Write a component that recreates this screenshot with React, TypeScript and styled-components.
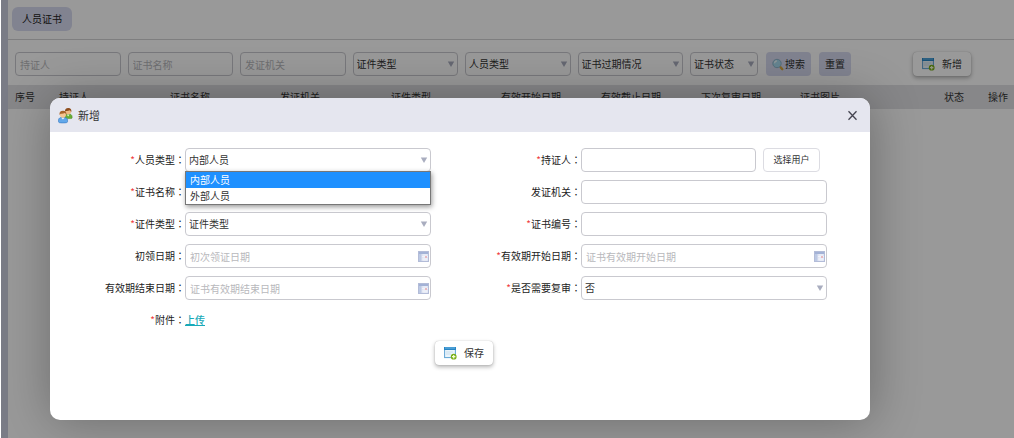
import React, { useState } from "react";
import styled, { createGlobalStyle, css } from "styled-components";

const GlobalStyle = createGlobalStyle`
  *, *::before, *::after { box-sizing: border-box; }
  body {
    margin: 0;
    padding-left: 1px;
    background: #fff;
    color: #333;
    font-family: "Noto Sans CJK SC", sans-serif;
    font-size: 10px;
    line-height: 16px;
  }
  button, input, select { font: inherit; color: inherit; margin: 0; }
`;

const Page = styled.div`
  position: relative;
  min-height: 100vh;
  border-left: 7px solid #cccfe0;
`;

const TabBar = styled.nav`
  display: flex;
  padding: 7px 4px 8px;
  border-bottom: 1px solid #d2d2d4;
`;

const Tab = styled.a`
  padding: 4px 10px;
  border-radius: 6px;
  background: #d8dbf0;
  color: #222;
  text-decoration: none;
`;

const Toolbar = styled.form`
  display: flex;
  gap: 8px;
  padding: 12px 43px 9px 7px;
`;

const Filters = styled.div`
  display: flex;
  flex: 1;
  gap: 7px;
`;

const Slot = styled.div<{ $width?: number }>`
  display: grid;
  position: relative;
  align-items: center;
  min-width: 0;
  ${({ $width }) => ($width ? css`flex: none; width: ${$width}px;` : css`flex: 1;`)}
  > * { grid-area: 1 / 1; }
  > svg { justify-self: end; margin-right: 2px; pointer-events: none; }
`;

const field = css`
  width: 100%;
  min-width: 0;
  height: 24px;
  border: 1px solid #c9c9cf;
  border-radius: 4px;
  background: #fff;
  outline: none;
`;

const TextBox = styled.input`
  ${field}
  padding: 0 4px;
  &::placeholder { color: #b8b8bc; opacity: 1; }
`;

const DropDown = styled.select`
  ${field}
  padding: 0 3px;
  appearance: none;
`;

const Button = styled.button<{ $raised?: boolean }>`
  display: flex;
  align-items: center;
  justify-content: center;
  gap: ${({ $raised }) => ($raised ? 7 : 1)}px;
  height: 24px;
  padding: 0 6px;
  border: 0;
  border-radius: 4px;
  background: ${({ $raised }) => ($raised ? "#fff" : "#d8dbf0")};
  color: #333;
  white-space: nowrap;
  ${({ $raised }) => $raised && css`
    padding: 0 9px;
    box-shadow: 0 2px 4px rgba(0, 0, 0, 0.3), 0 0 1px rgba(0, 0, 0, 0.3);
  `}
`;

const AddSlot = styled.div`
  margin-left: 54px;
`;

const Table = styled.table`
  width: 100%;
  table-layout: fixed;
  border-collapse: collapse;
  background: #e1e1e4;
  th {
    height: 24px;
    padding: 0 0 0 7px;
    font-weight: 400;
    text-align: left;
    white-space: nowrap;
  }
`;

const Overlay = styled.div`
  position: absolute;
  inset: 0 0 0 -7px;
  padding: 98px 144px 18px 49px;
  background: rgba(0, 0, 0, 0.4);
`;

const Dialog = styled.section`
  border-radius: 10px;
  background: #fff;
  box-shadow: 1px 1px 50px rgba(0, 0, 0, 0.3);
`;

const DialogHeader = styled.header`
  display: flex;
  align-items: center;
  gap: 5px;
  height: 34px;
  padding: 0 12px 0 8px;
  border-radius: 10px 10px 0 0;
  background: #e5e6ef;
`;

const Title = styled.h2`
  flex: 1;
  margin: 0;
  font-size: 11px;
  font-weight: 400;
`;

const CloseButton = styled.button`
  display: flex;
  padding: 0;
  border: 0;
  background: none;
`;

const Fields = styled.form`
  display: grid;
  grid-template-columns: 1fr 1fr;
  gap: 8px 15px;
  padding: 16px 43px 55px 0;
`;

const Row = styled.div`
  display: flex;
  align-items: center;
  height: 24px;
`;

const Label = styled.label`
  flex: none;
  width: 135px;
  text-align: right;
  color: #222;
`;

const Colon = styled.span`
  font-family: "Noto Sans CJK TC", sans-serif;
`;

const Required = styled.span`
  color: #f03c3c;
`;

const PickUser = styled.button`
  flex: none;
  width: 57px;
  height: 24px;
  margin: 0 7px;
  padding: 0;
  border: 1px solid #dcdce2;
  border-radius: 4px;
  background: #fff;
  font-size: 9px;
`;

const Upload = styled.a`
  color: #17a9b8;
  font-weight: 500;
`;

const Options = styled.ul`
  position: absolute;
  top: 23px;
  left: 0;
  right: 0;
  z-index: 1;
  margin: 0;
  padding: 0;
  border: 1px solid #777;
  background: #fff;
  box-shadow: 1px 2px 5px rgba(0, 0, 0, 0.4);
  list-style: none;
`;

const Option = styled.li<{ $active: boolean }>`
  padding: 0 4px;
  background: ${({ $active }) => ($active ? "#1e90ff" : "#fff")};
  color: ${({ $active }) => ($active ? "#fff" : "#333")};
`;

const Footer = styled.div`
  display: flex;
  grid-column: 1 / -1;
  justify-content: center;
  padding: 1px 0 0 51px;
`;

const Arrow = () => (
  <svg width="10" height="8" viewBox="0 0 10 8" aria-hidden="true">
    <path d="M1.800 1.500h6.400L5 7z" fill="#a9adbf" />
  </svg>
);

const CalendarIcon = () => (
  <svg width="11" height="11" viewBox="0 0 11 11" aria-hidden="true">
    <rect x=".5" y=".5" width="10" height="10" fill="#dfe4f2" stroke="#b3bcd8" />
    <path d="M1 1h9v2H1z" fill="#a3b2d6" />
    <path d="M1 3h2.500v7H1z" fill="#bcc9e4" />
    <path d="M4 5.500h6M4 8h6M6 3v7M8 3v7" stroke="#f7f8fd" strokeWidth=".7" />
    <path d="M7 5h2v2H7z" fill="#e8b9c0" />
  </svg>
);

const FormIcon = () => (
  <svg width="13" height="14" viewBox="0 0 13 14" aria-hidden="true">
    <rect x=".6" y="1.600" width="10.800" height="10" fill="#eaf4fb" stroke="#5fa3d3" />
    <path d="M0 1h12v3H0z" fill="#2786c5" />
    <path d="M1 2h10" stroke="#82c3ed" strokeWidth=".8" />
    <path d="M2 6h7M2 8h5" stroke="#c9deed" />
    <circle cx="9.700" cy="10.700" r="2.900" fill="#79ae19" />
    <path d="M9.700 9v3.400M8 10.700h3.400" stroke="#f6ffd5" strokeWidth="1.200" />
  </svg>
);

const SearchIcon = () => (
  <svg width="12" height="13" viewBox="0 0 12 13" aria-hidden="true">
    <path d="M8.600 9.300l1.700 1.900" stroke="#d9a83d" strokeWidth="2.400" strokeLinecap="round" />
    <circle cx="5" cy="5.500" r="4.200" fill="#a9dcf0" stroke="#8fb4cb" />
    <path d="M2.600 5.300A2.600 2.600 0 015 2.900" fill="none" stroke="#f2fcff" strokeWidth="1.200" />
  </svg>
);

const UsersIcon = () => (
  <svg width="15" height="17" viewBox="0 0 17 18" aria-hidden="true">
    <path d="M7.500 12.500V10c0-2 1.500-3 4-3s4.500 1.200 4.500 3.500v1c0 .8-1 1-2 1z" fill="#68ad35" stroke="#4d8d26" strokeWidth=".6" />
    <path d="M10 8l1.500 2L13 8z" fill="#e8f6dc" />
    <circle cx="11.500" cy="4.500" r="3.200" fill="#f1b983" />
    <path d="M8 4.800C7.500 2 9 .5 11.700.5S15.800 2.300 15 5.400c-.6-1.300-1-1.800-1.500-2.300-1.500.8-3.500.8-4.500.7z" fill="#8e4d1c" />
    <path d="M.6 16v-1.800C.6 12 2.500 11 5.600 11s5.200 1 5.200 3.200V16c0 1-1.300 1.400-5.200 1.400S.6 17 .6 16z" fill="#62a8ea" stroke="#3579c2" strokeWidth=".7" />
    <path d="M3.800 11.500l1.800 2 1.800-2z" fill="#eef7ff" />
    <circle cx="5.600" cy="8" r="3.500" fill="#f7c592" />
    <path d="M1.800 8.400C1.200 5.300 2.800 3.700 5.700 3.700s4.500 1.800 3.700 5c-.5-1.400-1-2-1.600-2.500-1.600.9-3.800.9-4.900.7z" fill="#a9642a" />
  </svg>
);

const CloseIcon = () => (
  <svg width="11" height="11" viewBox="0 0 11 11" aria-hidden="true">
    <path d="M1.500 1.300l8 8.400M9.500 1.300l-8 8.400" stroke="#444450" strokeWidth="1.300" />
  </svg>
);

const columns: [string, number | undefined][] = [
  ["序号", 44],
  ["持证人", 111],
  ["证书名称", 110],
  ["发证机关", 111],
  ["证件类型", 110],
  ["有效开始日期", 100],
  ["有效截止日期", 100],
  ["下次复审日期", 99],
  ["证书图片", undefined],
  ["状态", 44],
  ["操作", 33],
];

const textFilters = ["持证人", "证书名称", "发证机关"];
const selectFilters: [string, number | undefined][] = [
  ["证件类型", undefined],
  ["人员类型", undefined],
  ["证书过期情况", undefined],
  ["证书状态", 68],
];
const staffTypes = ["内部人员", "外部人员"];

type FieldProps = {
  id: string;
  label: string;
  required?: boolean;
  children: React.ReactNode;
};

const Field = ({ id, label, required, children }: FieldProps) => (
  <Row>
    <Label htmlFor={id}>
      {required && <Required>*</Required>}
      {label}
      <Colon>：</Colon>
    </Label>
    {children}
  </Row>
);

export default function App() {
  const [staffType, setStaffType] = useState(staffTypes[0]);
  const [listOpen, setListOpen] = useState(true);

  const choose = (value: string) => {
    setStaffType(value);
    setListOpen(false);
  };

  return (
    <>
      <GlobalStyle />
      <Page>
        <TabBar>
          <Tab href="#certificates">人员证书</Tab>
        </TabBar>
        <Toolbar>
          <Filters>
            {textFilters.map((name) => (
              <Slot key={name}>
                <TextBox placeholder={name} aria-label={name} />
              </Slot>
            ))}
            {selectFilters.map(([name, width]) => (
              <Slot key={name} $width={width}>
                <DropDown aria-label={name}>
                  <option>{name}</option>
                </DropDown>
                <Arrow />
              </Slot>
            ))}
          </Filters>
          <Button type="button">
            <SearchIcon />
            搜索
          </Button>
          <Button type="reset">重置</Button>
          <AddSlot>
            <Button type="button" $raised>
              <FormIcon />
              新增
            </Button>
          </AddSlot>
        </Toolbar>
        <Table>
          <colgroup>
            {columns.map(([name, width]) => (
              <col key={name} width={width} />
            ))}
          </colgroup>
          <thead>
            <tr>
              {columns.map(([name]) => (
                <th key={name} scope="col">{name}</th>
              ))}
            </tr>
          </thead>
        </Table>

        <Overlay>
          <Dialog role="dialog" aria-labelledby="dialog-title">
            <DialogHeader>
              <UsersIcon />
              <Title id="dialog-title">新增</Title>
              <CloseButton type="button" aria-label="关闭">
                <CloseIcon />
              </CloseButton>
            </DialogHeader>
            <Fields>
              <Field id="staff-type" label="人员类型" required>
                <Slot>
                  <DropDown
                    id="staff-type"
                    value={staffType}
                    onChange={(event) => choose(event.target.value)}
                  >
                    {staffTypes.map((type) => (
                      <option key={type}>{type}</option>
                    ))}
                  </DropDown>
                  <Arrow />
                  {listOpen && (
                    <Options role="listbox">
                      {staffTypes.map((type) => (
                        <Option
                          key={type}
                          role="option"
                          aria-selected={type === staffType}
                          $active={type === staffType}
                          onClick={() => choose(type)}
                        >
                          {type}
                        </Option>
                      ))}
                    </Options>
                  )}
                </Slot>
              </Field>
              <Field id="holder" label="持证人" required>
                <Slot>
                  <TextBox id="holder" />
                </Slot>
                <PickUser type="button">选择用户</PickUser>
              </Field>
              <Field id="cert-name" label="证书名称" required>
                <Slot>
                  <TextBox id="cert-name" />
                </Slot>
              </Field>
              <Field id="issuer" label="发证机关">
                <Slot>
                  <TextBox id="issuer" />
                </Slot>
              </Field>
              <Field id="cert-type" label="证件类型" required>
                <Slot>
                  <DropDown id="cert-type">
                    <option>证件类型</option>
                  </DropDown>
                  <Arrow />
                </Slot>
              </Field>
              <Field id="cert-number" label="证书编号" required>
                <Slot>
                  <TextBox id="cert-number" />
                </Slot>
              </Field>
              <Field id="first-date" label="初领日期">
                <Slot>
                  <TextBox id="first-date" placeholder="初次领证日期" />
                  <CalendarIcon />
                </Slot>
              </Field>
              <Field id="start-date" label="有效期开始日期" required>
                <Slot>
                  <TextBox id="start-date" placeholder="证书有效期开始日期" />
                  <CalendarIcon />
                </Slot>
              </Field>
              <Field id="end-date" label="有效期结束日期">
                <Slot>
                  <TextBox id="end-date" placeholder="证书有效期结束日期" />
                  <CalendarIcon />
                </Slot>
              </Field>
              <Field id="review" label="是否需要复审" required>
                <Slot>
                  <DropDown id="review">
                    <option>否</option>
                    <option>是</option>
                  </DropDown>
                  <Arrow />
                </Slot>
              </Field>
              <Field id="attachment" label="附件" required>
                <Upload id="attachment" href="#upload">上传</Upload>
              </Field>
              <Footer>
                <Button type="submit" $raised>
                  <FormIcon />
                  保存
                </Button>
              </Footer>
            </Fields>
          </Dialog>
        </Overlay>
      </Page>
    </>
  );
}
